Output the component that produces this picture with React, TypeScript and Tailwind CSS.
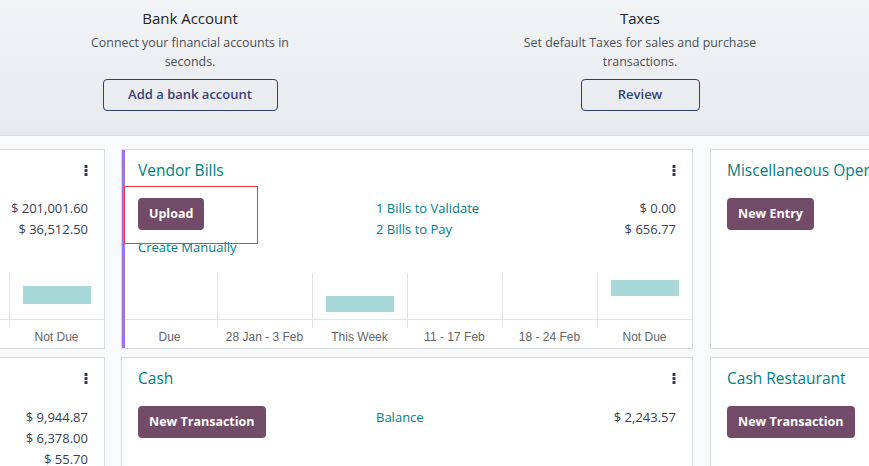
import React from "react";

const FONT = { fontFamily: '"Open Sans", "Noto Sans", sans-serif' };

function Kebab() {
  return (
    <svg width="4" height="11" viewBox="0 0 4 11" className="block">
      <rect x="0.5" y="0" width="3" height="3" rx="0.5" fill="#2f3a55" />
      <rect x="0.5" y="4" width="3" height="3" rx="0.5" fill="#2f3a55" />
      <rect x="0.5" y="8" width="3" height="3" rx="0.5" fill="#2f3a55" />
    </svg>
  );
}

type Bar = { top: number; h: number } | null;

function Chart({ labels, bars }: { labels: string[]; bars: Bar[] }) {
  return (
    <div
      className="flex mt-auto h-[75px]"
      style={{ fontFamily: '"Liberation Sans", Arial, sans-serif' }}
    >
      {labels.map((l, i) => (
        <div key={i} className="flex flex-col w-[95px]">
          <div className={`h-[55px] flex flex-col ${i > 0 ? "border-l border-[#e4e4e4]" : ""}`}>
            <div className="h-[47px] border-b border-[#e4e4e4]">
              {bars[i] && (
                <div
                  className="mx-auto w-[68px] bg-[#a8d9d8]"
                  style={{ marginTop: bars[i]!.top, height: bars[i]!.h }}
                />
              )}
            </div>
          </div>
          <div className="pt-[2px] text-center text-[12px] leading-[15px] text-[#666] whitespace-nowrap">
            {l}
          </div>
        </div>
      ))}
    </div>
  );
}

function PurpleBtn({ children }: { children: React.ReactNode }) {
  return (
    <button className="h-[32px] px-[11px] rounded-[4px] bg-[#714b67] text-white text-[12.5px] font-bold leading-[32px] whitespace-nowrap">
      {children}
    </button>
  );
}

const chartLabels = ["Due", "28 Jan - 3 Feb", "This Week", "11 - 17 Feb", "18 - 24 Feb", "Not Due"];

export default function App() {
  return (
    <div
      className="w-[869px] h-[466px] overflow-hidden bg-[#f9fafb] text-[#374151]"
      style={FONT}
    >
      {/* Banner */}
      <div className="h-[136px] border-b border-[#d8dadd] bg-gradient-to-b from-[#f3f4f6] to-[#e8e9ed] flex pl-[40px] gap-[150px]">
        <div className="w-[300px] flex flex-col items-center pt-[6px]">
          <div className="text-[15px] leading-[24px] text-[#212529]">Bank Account</div>
          <div className="mt-[3px] w-[240px] text-center text-[12.4px] leading-[19px] text-[#495057]">
            Connect your financial accounts in seconds.
          </div>
          <button className="mt-[8px] h-[32px] w-[175px] rounded-[4px] border border-[#2f3f6e] text-[13px] font-semibold text-[#34437a]">
            Add a bank account
          </button>
        </div>
        <div className="w-[300px] flex flex-col items-center pt-[6px]">
          <div className="text-[15px] leading-[24px] text-[#212529]">Taxes</div>
          <div className="mt-[3px] w-[240px] text-center text-[12.4px] leading-[19px] text-[#495057]">
            Set default Taxes for sales and purchase transactions.
          </div>
          <button className="mt-[8px] h-[32px] w-[119px] rounded-[4px] border border-[#2f3f6e] text-[13px] font-semibold text-[#34437a]">
            Review
          </button>
        </div>
      </div>

      {/* Row 1 */}
      <div className="flex mt-[13px]">
        {/* Customer Invoices (cut off) */}
        <div className="ml-[-467px] w-[572px] h-[200px] shrink-0 bg-white border border-[#d8dadd] flex flex-col">
          <div className="px-[16px] pt-[8px] h-[32px] flex items-center justify-between">
            <span className="text-[15.5px] leading-[24px] text-[#017e84]">Customer Invoices</span>
            <Kebab />
          </div>
          <div className="px-[16px] mt-[16px] flex">
            <div className="w-[238px]">
              <PurpleBtn>New</PurpleBtn>
            </div>
            <div className="flex-1 text-[13px] leading-[21px] text-[#017e84]">
              <div>1 Invoices to Validate</div>
              <div>5 Unpaid Invoices</div>
            </div>
            <div className="text-right text-[13px] leading-[21px]">
              <div>$ 201,001.60</div>
              <div>$ 36,512.50</div>
            </div>
          </div>
          <Chart labels={chartLabels} bars={[null, null, null, null, null, { top: 13, h: 18 }]} />
        </div>

        {/* Vendor Bills */}
        <div className="relative ml-[16px] w-[572px] h-[200px] shrink-0 bg-white border border-[#d8dadd] flex flex-col">
          <div className="absolute left-0 top-0 bottom-0 w-[3px] bg-[#9d74e6]" />
          <div className="px-[16px] pt-[8px] h-[32px] flex items-center justify-between">
            <span className="text-[15.5px] leading-[24px] text-[#017e84]">Vendor Bills</span>
            <Kebab />
          </div>
          <div className="px-[16px] mt-[16px] flex">
            <div className="w-[238px]">
              <PurpleBtn>Upload</PurpleBtn>
              <div className="mt-[7px] text-[13px] leading-[20px] text-[#017e84]">Create Manually</div>
            </div>
            <div className="flex-1 text-[13px] leading-[21px] text-[#017e84]">
              <div>1 Bills to Validate</div>
              <div>2 Bills to Pay</div>
            </div>
            <div className="text-right text-[13px] leading-[21px]">
              <div>$ 0.00</div>
              <div>$ 656.77</div>
            </div>
          </div>
          <Chart
            labels={chartLabels}
            bars={[null, null, { top: 23, h: 16 }, null, null, { top: 7, h: 16 }]}
          />
          <div className="absolute left-[2px] top-[36px] w-[134px] h-[58px] border border-[#f03c3c]" />
        </div>

        {/* Misc */}
        <div className="ml-[17px] w-[572px] h-[200px] shrink-0 bg-white border border-[#d8dadd] flex flex-col">
          <div className="px-[16px] pt-[8px] h-[32px] flex items-center justify-between">
            <span className="text-[15.5px] leading-[24px] text-[#017e84] whitespace-nowrap">
              Miscellaneous Operations
            </span>
            <Kebab />
          </div>
          <div className="px-[16px] mt-[16px] flex">
            <PurpleBtn>New Entry</PurpleBtn>
          </div>
        </div>
      </div>

      {/* Row 2 */}
      <div className="flex mt-[8px]">
        <div className="ml-[-467px] w-[572px] h-[200px] shrink-0 bg-white border border-[#d8dadd] flex flex-col">
          <div className="px-[16px] pt-[8px] h-[32px] flex items-center justify-between">
            <span className="text-[15.5px] leading-[24px] text-[#017e84]">Bank</span>
            <Kebab />
          </div>
          <div className="px-[16px] mt-[17px] flex">
            <div className="w-[238px]">
              <PurpleBtn>Online Synchronization</PurpleBtn>
            </div>
            <div className="flex-1 text-[13px] leading-[21px] text-[#017e84]">
              <div>Balance</div>
              <div>Payments</div>
              <div>Misc</div>
            </div>
            <div className="text-right text-[13px] leading-[21px]">
              <div>$ 9,944.87</div>
              <div>$ 6,378.00</div>
              <div>$ 55.70</div>
            </div>
          </div>
        </div>

        <div className="ml-[16px] w-[572px] h-[200px] shrink-0 bg-white border border-[#d8dadd] flex flex-col">
          <div className="px-[16px] pt-[8px] h-[32px] flex items-center justify-between">
            <span className="text-[15.5px] leading-[24px] text-[#017e84]">Cash</span>
            <Kebab />
          </div>
          <div className="px-[16px] mt-[16px] flex">
            <div className="w-[238px]">
              <PurpleBtn>New Transaction</PurpleBtn>
            </div>
            <div className="flex-1 text-[13px] leading-[21px] text-[#017e84]">
              <div className="pt-[1px]">Balance</div>
            </div>
            <div className="text-right text-[13px] leading-[21px]">
              <div className="pt-[1px]">$ 2,243.57</div>
            </div>
          </div>
        </div>

        <div className="ml-[17px] w-[572px] h-[200px] shrink-0 bg-white border border-[#d8dadd] flex flex-col">
          <div className="px-[16px] pt-[8px] h-[32px] flex items-center justify-between">
            <span className="text-[15.5px] leading-[24px] text-[#017e84]">Cash Restaurant</span>
            <Kebab />
          </div>
          <div className="px-[16px] mt-[16px] flex">
            <PurpleBtn>New Transaction</PurpleBtn>
          </div>
        </div>
      </div>
    </div>
  );
}
